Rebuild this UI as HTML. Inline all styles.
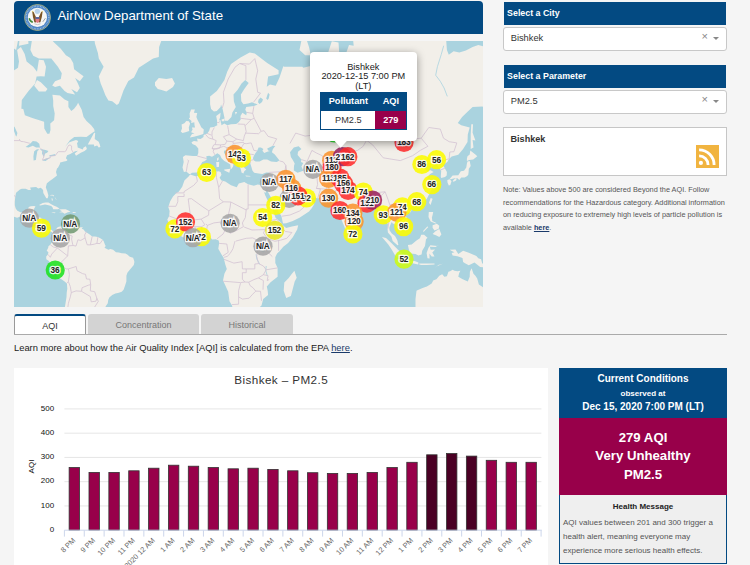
<!DOCTYPE html>
<html><head><meta charset="utf-8">
<style>
*{box-sizing:border-box;margin:0;padding:0}
html,body{width:750px;height:565px;overflow:hidden;background:#f5f5f5;font-family:"Liberation Sans",sans-serif;color:#222}
.abs{position:absolute}
#hdr{left:14px;top:1px;width:469px;height:33px;background:#034a82;border-radius:4px 4px 0 0}
#hdr .t{left:43.5px;top:7px;color:#fff;font-size:13.3px;white-space:nowrap}
#map{left:14px;top:41px;width:469px;height:266px;background:#aad3df;overflow:hidden}
.ph{left:503.5px;width:222.8px;height:23.4px;background:#034a82;color:#fff;font-weight:bold;font-size:8.85px;padding:0 0 0 3.6px;line-height:23px;white-space:nowrap}
.dd{left:503.4px;width:223.6px;height:24px;background:#fff;border:1px solid #c8c8c8;border-radius:3px;font-size:9.3px;color:#333;line-height:21px;padding-left:6.3px}
.dd .x{position:absolute;left:197px;top:-1.8px;color:#888;font-size:11px}
.dd .ar{position:absolute;left:209px;top:9.2px;width:0;height:0;border-left:3.4px solid transparent;border-right:3.4px solid transparent;border-top:3.4px solid #888}
#rss{left:503px;top:127px;width:224px;height:49px;background:#fff;border:1px solid #c6c6c6}
#note{left:503px;top:183.8px;width:226px;font-size:7.32px;line-height:12.85px;color:#555;white-space:nowrap}
#note b{color:#1a3a6a;text-decoration:underline}
.tab{top:314px;height:21px;border-radius:3px 3px 0 0;font-size:9px;color:#777;text-align:center;line-height:22.5px;background:#d3d3d3}
#tabline{left:14px;top:334px;width:713px;height:1px;background:#aaa}
#learn{left:14px;top:343px;font-size:9.35px;color:#222;white-space:nowrap}
#learn b{text-decoration:underline;color:#1a3a6a;font-weight:normal}
#chart{left:14px;top:368px;width:534px;height:197px;background:#fff}
#cc{left:559px;top:368px;width:168px;height:196px;background:#efefef;border:1px solid #034a82;border-top:none}
#cc .top{position:absolute;left:-1px;top:0;width:168px;height:50px;background:#034a82;color:#fff;font-weight:bold;text-align:center}
#cc .mid{position:absolute;left:-1px;top:50px;width:168px;height:77px;background:#98004a;color:#fff;font-weight:bold;text-align:center;font-size:13.2px;line-height:18.6px;padding-top:10.6px}
#cc .hm{position:absolute;left:0;top:133.6px;width:166px;text-align:center;font-weight:bold;font-size:8px;color:#222}
#cc .body{position:absolute;left:3px;top:147.6px;width:165px;font-size:8px;line-height:14px;color:#555;white-space:nowrap}
.ml{font:bold 8.3px "Liberation Sans",sans-serif;letter-spacing:-0.2px;text-anchor:middle;fill:#222;stroke:rgba(255,255,255,0.9);stroke-width:2.6px;stroke-linejoin:miter;paint-order:stroke}
.ct{font:11.7px "Liberation Sans",sans-serif;text-anchor:middle;fill:#333;letter-spacing:0.4px}
.yl{font:8px "Liberation Sans",sans-serif;text-anchor:end;fill:#111}
.yt{font:8px "Liberation Sans",sans-serif;text-anchor:middle;fill:#111}
.xl{font:7.4px "Liberation Sans",sans-serif;text-anchor:end;fill:#666}
</style></head><body>
<div id="hdr" class="abs">
  <svg class="abs" style="left:10px;top:3px" width="27" height="27" viewBox="0 0 27 27">
    <circle cx="13.5" cy="13.5" r="13" fill="#4f86c6" stroke="#b8b878" stroke-width="0.8"/>
    <circle cx="13.5" cy="13.5" r="11.4" fill="none" stroke="#a8c8ea" stroke-width="1.2" stroke-dasharray="0.7 0.9"/>
    <circle cx="13.4" cy="13.4" r="9.6" fill="#f6f6f4"/>
    <circle cx="13.4" cy="7.3" r="2.6" fill="#b8d2ea"/>
    <path d="M8.2 7.4 L9.6 7.9 Q11 11 12.4 14 L12 18.4 L10.4 18.2 Q8.6 12.5 8.2 7.4Z" fill="#7b5426"/>
    <path d="M18.6 7.4 L17.2 7.9 Q15.8 11 14.4 14 L14.8 18.4 L16.4 18.2 Q18.2 12.5 18.6 7.4Z" fill="#7b5426"/>
    <circle cx="8.6" cy="7.6" r="0.7" fill="#d8c860"/><circle cx="18.2" cy="7.6" r="0.7" fill="#d8c860"/>
    <circle cx="13.4" cy="12.2" r="1.1" fill="#fff"/>
    <path d="M11.5 13.2 H15.4 V16.6 Q15.4 18.4 13.45 19 Q11.5 18.4 11.5 16.6Z" fill="#e07a84"/>
    <rect x="11.5" y="13.2" width="3.9" height="1.6" fill="#3d5fa0"/>
    <path d="M5.2 14.2 Q6 17.5 8.8 18.2" stroke="#3f8a3c" stroke-width="1.5" fill="none"/>
    <path d="M18.8 17.8 L21.4 14.2" stroke="#9a9a9a" stroke-width="0.9"/>
    <path d="M10.5 19.8 Q13.5 21.6 16.5 19.8" stroke="#c8c8c8" stroke-width="1" fill="none"/>
  </svg>
  <div class="abs t">AirNow Department of State</div>
</div>
<div id="map" class="abs"><svg width="469" height="266" viewBox="0 0 469 266"><!--MAPSTART--><path d="M-60.7 28.3L-22.6 28.3L-11.2 28.3L0.2 29.3L4.0 26.7L5.0 20.4L3.1 9.0L6.9 5.9L10.7 13.1L12.6 20.4L19.2 25.7L23.0 30.8L24.9 18.7L29.7 19.3L32.0 25.7L30.6 35.6L26.8 35.2L22.6 35.6L21.1 42.6L14.5 50.0L7.8 59.0L7.4 67.7L9.3 68.1L10.9 74.2L18.3 76.9L30.1 80.7L30.3 87.5L33.3 92.7L35.4 92.7L36.5 89.0L36.3 82.6L40.1 79.3L40.7 72.4L39.2 65.1L39.2 59.4L38.4 53.8L45.9 54.6L50.6 58.6L54.4 60.2L54.4 65.9L57.3 69.9L60.1 67.7L63.0 64.0L64.1 61.7L67.7 68.8L69.6 75.9L72.5 80.0L77.2 84.3L80.1 88.1L80.7 90.3L78.0 92.1L72.5 96.0L66.8 95.7L60.3 96.0L55.9 99.3L52.5 104.1L51.2 105.8L55.4 101.3L62.0 99.0L64.3 100.1L63.0 102.4L63.4 104.1L63.7 106.6L68.7 108.6L69.6 106.6L71.9 105.3L72.9 108.0L70.6 109.9L66.8 111.8L62.0 114.7L60.7 112.6L63.9 109.7L61.1 110.2L59.2 111.3L56.3 112.9L53.1 114.2L51.9 117.3L53.5 119.1L52.5 119.9L50.0 120.4L46.2 121.6L45.9 123.1L44.1 126.4L43.0 127.6L42.0 130.9L43.0 134.5L41.1 136.1L38.2 138.2L36.0 139.8L32.9 142.3L31.8 146.3L33.3 150.4L34.4 154.5L33.7 157.2L32.3 157.2L31.0 155.1L29.3 152.1L29.1 148.9L26.8 146.7L24.2 147.6L22.1 146.0L19.0 146.3L16.2 146.5L16.9 148.9L14.5 148.9L11.6 147.8L7.8 147.8L5.9 148.5L2.1 151.7L1.3 155.5L0.8 160.8L0.8 164.3L1.7 167.5L3.4 169.8L5.9 171.0L7.1 171.6L10.1 171.0L12.9 170.8L14.1 169.0L14.7 165.9L16.8 165.3L20.2 164.9L21.5 165.5L20.2 167.5L19.6 171.0L18.7 173.0L18.7 176.0L20.6 176.4L23.2 176.2L26.3 176.4L28.4 177.9L28.0 181.9L27.4 185.7L28.7 187.7L30.6 189.6L33.5 189.2L35.4 188.5L37.3 188.8L39.4 190.4L40.5 190.8L42.0 188.8L43.0 186.7L44.9 185.7L47.8 185.2L49.3 183.8L51.0 184.2L53.1 184.8L53.5 183.4L54.4 184.8L56.9 186.7L61.1 186.5L64.5 186.7L66.8 186.3L68.9 186.3L67.7 187.7L69.6 188.6L71.0 190.6L73.4 191.9L75.7 193.6L78.2 195.4L81.0 195.6L83.9 196.1L86.7 197.5L88.6 198.8L89.6 200.1L90.9 203.4L91.7 204.9L90.5 206.8L94.4 208.7L96.3 207.9L99.1 208.7L102.0 211.2L104.8 211.6L107.7 212.3L111.5 212.5L113.6 213.8L115.8 215.8L119.1 216.7L120.0 219.2L120.4 221.1L119.8 224.0L118.1 225.9L115.8 228.8L113.4 231.7L112.4 234.7L112.4 240.6L111.1 244.6L109.6 248.7L107.7 250.7L104.8 251.8L101.4 252.6L98.2 253.9L95.3 256.4L94.2 259.1L93.8 262.3L91.9 265.1L90.5 267.8L88.6 271.1L85.8 275.0L78.2 285.1L47.8 285.1L50.4 273.4L50.8 266.7L51.7 261.2L52.5 255.9L52.7 251.8L53.3 247.7L52.9 242.6L50.6 240.6L47.8 238.6L43.9 236.1L41.5 233.3L39.8 229.8L38.2 225.9L36.3 222.1L34.6 219.8L32.3 218.2L32.2 215.4L33.9 213.5L34.4 211.2L32.7 209.7L34.2 206.8L34.4 205.3L36.3 203.8L37.3 202.0L39.2 199.6L39.6 195.4L38.8 192.9L37.9 191.1L35.4 190.0L33.9 192.7L31.6 191.5L29.1 191.0L27.8 190.6L25.3 188.1L23.6 187.7L23.4 185.4L21.1 182.8L20.0 181.5L18.3 181.5L15.4 180.5L12.6 179.9L10.7 178.3L8.2 176.2L6.3 175.6L3.1 176.7L-0.7 175.6L-5.5 173.0L-14.1 166.9L-22.6 159.7L-41.6 146.9L-60.7 63.3ZM25.1 164.1L28.7 162.0L31.6 161.6L34.4 161.6L37.3 163.3L39.6 164.5L42.6 165.7L45.5 167.5L43.9 168.2L39.2 168.2L38.6 166.5L37.3 164.9L33.5 163.9L31.0 163.5L28.7 163.9L26.1 164.5ZM45.1 168.4L48.1 168.2L51.6 168.2L54.4 169.4L56.5 170.8L53.8 171.2L50.6 172.8L48.7 171.6L45.1 171.2L48.1 170.2ZM37.7 171.2L41.7 171.6L40.5 172.2L37.7 171.6ZM37.5 157.2L38.8 157.7L38.6 159.7L37.9 159.7ZM36.3 154.1L38.4 153.8L40.1 154.5L40.0 155.5L38.4 154.5L36.3 154.5ZM40.7 156.4L41.7 157.0L41.9 158.5L42.6 159.3L42.2 158.3L41.1 157.2ZM58.6 171.0L61.8 171.2L61.6 172.0L58.8 172.0ZM47.8 -38.8L76.3 -21.8L72.5 -20.2L79.1 -10.6L81.0 2.8L83.9 11.9L84.8 17.6L89.6 25.7L84.8 35.6L86.7 42.6L88.6 47.0L91.5 54.6L94.4 59.4L98.2 60.2L102.9 64.0L104.8 62.5L106.7 57.4L109.6 49.2L114.3 39.9L120.0 36.6L124.8 26.7L139.1 17.6L144.8 16.0L145.1 5.9L148.6 -3.7L152.4 -30.0L148.6 -83.2L72.5 -83.2ZM141.0 41.2L144.8 37.1L152.4 38.0L158.1 37.1L160.9 42.6L159.0 46.1L152.4 50.4L146.7 48.7L143.8 47.9L141.0 44.4ZM24.9 -3.7L34.4 -5.0L40.1 1.5L46.8 7.8L51.9 14.3L56.3 17.1L59.2 22.0L60.1 28.3L66.8 33.2L69.6 35.2L65.8 40.3L61.1 37.1L63.9 42.6L65.8 47.0L63.0 51.3L57.3 47.9L61.1 53.4L53.5 52.1L50.6 50.0L45.9 44.8L41.1 46.1L38.2 44.4L41.1 40.3L46.8 38.0L47.8 32.3L43.9 25.7L37.3 17.6L24.9 17.6L19.2 14.8L16.4 9.0L18.3 -3.0ZM20.2 44.8L23.0 38.9L26.8 41.2L33.5 47.9L31.6 50.4L24.9 50.4ZM5.0 4.7L14.5 2.8L13.5 -10.6L5.9 -7.1ZM2.1 9.0L-6.5 2.8L-7.4 -3.7L0.2 -7.1L4.0 -0.4ZM73.8 103.6L80.1 91.8L81.2 92.1L80.7 98.1L84.7 100.7L85.8 103.6L86.4 106.1L84.7 106.4L83.1 104.4L80.3 105.5L79.9 103.6L75.3 103.6ZM509.9 23.1L490.9 17.6L481.4 11.9L471.9 5.9L464.3 4.1L458.6 5.9L451.9 9.6L445.3 11.4L439.6 10.2L434.8 13.7L432.9 9.0L432.0 -3.7L414.8 -3.7L401.5 -5.0L392.0 -1.7L386.3 -34.3L357.8 -17.9L338.8 -3.7L339.7 4.7L335.0 4.1L326.4 28.3L324.5 1.5L317.8 0.3L313.1 14.8L314.0 21.5L300.7 24.1L289.3 26.7L288.4 25.7L270.3 25.7L269.3 25.2L265.5 36.6L261.7 44.8L256.0 43.5L252.8 45.7L254.1 35.6L264.6 33.2L264.6 29.3L253.2 22.0L240.8 12.5L235.7 11.4L226.5 16.5L217.0 23.1L213.2 30.8L210.4 38.9L206.6 44.8L202.8 50.0L196.1 55.4L196.1 63.3L197.1 68.1L199.9 70.6L202.8 69.9L206.6 65.9L207.0 63.6L208.5 67.4L209.4 71.7L211.1 79.8L213.8 79.7L217.4 75.9L218.4 71.4L221.8 65.9L219.9 60.6L219.5 53.4L223.7 48.7L227.5 42.6L231.3 38.9L234.7 42.1L230.3 47.9L226.9 53.4L227.3 60.2L229.4 63.3L234.1 62.5L238.0 61.3L243.7 63.6L239.9 65.1L232.2 65.9L231.3 68.8L232.8 71.4L232.2 74.2L228.4 71.7L226.5 74.9L226.7 78.6L224.6 81.3L222.2 83.0L217.0 83.3L213.2 84.3L210.4 82.6L207.5 84.3L207.1 81.7L205.2 79.0L206.2 75.9L206.6 71.7L202.2 74.9L203.0 79.3L203.0 81.3L203.3 84.3L199.9 85.9L196.1 86.5L195.2 89.7L193.3 92.4L189.6 93.9L189.5 96.0L186.6 98.1L184.1 97.8L183.0 97.5L183.7 100.4L179.9 100.1L177.5 101.3L178.4 103.0L181.8 104.4L184.3 107.5L184.3 112.1L183.2 115.0L179.0 115.0L171.4 114.2L168.9 116.0L169.7 121.1L168.5 126.6L169.9 130.9L172.3 130.5L175.2 133.1L176.3 133.1L178.0 131.7L182.8 131.4L185.1 129.5L186.6 126.6L186.0 124.9L188.3 121.1L190.8 120.1L192.7 118.6L192.3 115.2L195.2 114.7L198.0 115.8L200.9 113.9L203.3 112.3L206.0 113.9L207.5 117.3L210.4 119.9L213.2 121.6L216.3 123.6L216.7 127.3L216.5 128.5L218.0 127.3L219.3 125.1L219.3 122.4L221.8 123.1L220.8 121.9L217.0 119.9L213.4 117.3L212.5 114.5L210.0 112.1L210.0 109.7L212.8 109.1L214.2 110.7L216.1 113.7L218.9 115.5L221.8 117.6L223.7 119.4L223.5 122.9L225.0 124.9L226.7 127.8L227.5 131.4L229.4 132.4L230.3 130.2L232.2 128.5L230.0 126.4L231.3 123.6L229.6 122.4L233.2 121.6L236.1 121.6L236.6 123.4L237.4 126.1L238.5 129.7L240.2 131.7L244.6 132.6L248.4 133.1L252.2 131.4L255.1 131.4L254.7 134.5L254.1 137.9L253.0 141.4L251.8 144.1L248.0 144.3L243.7 143.6L239.9 144.7L234.1 143.2L230.3 140.9L224.8 142.5L222.7 146.3L217.0 144.3L211.3 140.5L207.5 139.5L205.6 136.8L207.5 133.8L206.6 130.9L204.7 130.2L199.9 130.9L192.3 131.4L186.6 133.5L182.4 135.4L176.1 133.5L174.6 135.6L170.4 139.5L168.2 145.8L164.7 150.8L161.9 152.4L159.0 155.5L156.2 160.2L154.3 165.9L155.6 170.0L155.2 175.0L153.3 178.5L154.6 181.9L154.8 183.2L157.1 184.8L159.0 186.7L161.3 188.6L162.8 192.5L166.6 194.8L172.1 198.4L177.1 197.1L182.8 197.7L188.5 195.4L192.3 194.6L196.1 196.3L198.2 198.6L201.8 198.2L204.7 199.4L205.2 202.0L204.7 204.9L204.3 207.8L207.5 213.5L209.4 216.3L210.0 218.2L211.3 223.6L212.8 227.9L210.4 232.7L209.0 239.6L210.9 243.6L214.2 250.7L215.5 260.2L218.0 264.5L220.8 275.7L234.1 276.8L247.5 264.5L249.2 258.1L254.1 253.9L253.7 249.7L252.8 245.6L256.6 241.2L263.6 235.7L263.6 226.9L261.3 222.1L261.3 216.3L263.1 212.5L265.5 210.2L269.3 205.8L274.1 202.0L278.8 196.3L283.2 188.6L284.2 184.2L277.9 185.4L272.2 186.9L269.0 184.6L266.5 180.9L261.7 176.9L259.8 172.0L257.5 165.9L254.1 160.2L251.3 154.5L248.6 147.1L250.3 151.3L251.8 151.7L252.2 148.0L253.2 148.0L254.1 151.3L257.0 156.6L260.8 163.9L263.6 169.0L267.4 175.0L269.0 182.4L272.2 182.2L278.8 179.9L285.5 176.7L291.2 173.0L295.0 170.4L297.9 166.9L300.3 162.9L297.9 160.4L294.1 158.7L293.7 154.9L291.2 157.7L285.5 159.7L284.6 156.6L283.2 158.1L281.7 154.5L277.9 148.0L278.8 146.9L281.7 146.9L283.6 150.2L289.3 154.1L294.1 153.2L296.0 156.2L303.6 157.2L308.3 157.0L313.1 156.8L314.0 158.1L315.9 160.2L317.8 162.9L319.7 165.9L324.7 165.3L325.1 170.0L326.4 176.0L327.3 177.9L328.9 182.2L331.2 187.7L334.0 191.3L335.3 189.6L337.4 187.1L339.1 181.9L339.1 176.9L343.1 174.8L347.3 170.4L351.5 167.3L352.1 164.9L354.9 164.5L358.7 163.9L361.2 163.1L362.5 166.9L365.8 172.0L366.3 176.0L368.2 176.4L372.0 175.0L373.0 179.9L373.9 183.8L373.6 188.6L373.9 191.5L377.4 195.4L378.7 200.1L383.5 204.3L384.4 203.9L383.3 199.2L381.0 195.0L377.8 192.5L375.5 189.2L375.3 186.7L376.8 182.8L377.8 180.9L378.7 182.4L381.6 183.4L383.5 186.7L385.9 190.4L389.2 188.6L393.7 184.8L394.5 180.9L393.2 176.9L389.5 173.0L387.8 170.0L389.7 166.5L392.0 164.9L395.8 167.3L396.8 165.5L402.5 163.5L403.8 163.3L408.2 162.0L412.9 157.7L414.5 154.5L416.7 150.2L418.5 146.9L418.3 144.7L416.4 140.9L413.3 136.8L415.8 133.3L419.6 130.9L416.7 129.3L412.6 130.2L411.0 127.3L410.5 126.1L413.3 124.1L416.7 121.6L417.1 126.6L419.6 124.1L423.0 123.9L424.4 126.1L427.2 129.7L426.8 135.6L427.2 137.0L431.0 136.1L432.7 134.5L432.9 130.9L430.8 127.3L429.1 124.1L433.3 121.1L435.2 117.8L437.7 115.5L444.3 113.7L449.1 108.0L453.5 101.0L453.8 93.6L455.7 86.5L447.2 84.3L443.8 82.0L448.1 75.9L453.8 70.6L458.6 65.9L468.1 65.5L475.7 67.0L509.9 63.3ZM207.5 78.6L210.6 77.6L210.4 80.3L207.9 80.3ZM205.6 79.3L207.1 79.7L206.8 81.0L205.4 80.7ZM221.0 71.0L223.1 71.0L221.8 73.8ZM175.8 96.6L179.9 95.7L184.7 94.5L189.3 93.0L189.8 88.4L187.2 86.2L186.2 83.9L183.6 79.0L182.4 75.9L183.2 72.1L179.9 71.7L180.9 68.5L177.1 68.5L175.6 72.4L175.9 76.6L174.8 77.6L177.5 80.0L177.1 82.0L180.3 81.3L180.5 84.3L181.1 86.5L177.9 86.5L178.6 88.4L177.1 91.2L180.5 92.4L178.0 93.0ZM175.2 90.0L174.8 86.5L176.1 82.6L174.8 80.3L172.3 80.0L170.4 82.3L167.6 83.6L168.0 87.5L166.8 90.6L168.5 92.1L171.4 91.2ZM202.6 126.1L204.9 126.1L205.2 121.1L202.2 121.1ZM203.0 119.9L204.7 118.6L204.5 116.0L203.0 117.6ZM210.2 128.5L216.3 127.8L215.3 131.7L210.4 129.5ZM231.3 134.5L236.6 134.9L236.1 135.6L232.2 135.4ZM248.0 135.6L252.4 134.0L250.9 135.9L248.4 136.3ZM280.4 229.8L282.7 236.7L280.7 240.6L276.9 254.9L272.2 257.0L269.7 249.7L270.3 241.6L274.7 237.0L277.9 232.7ZM338.6 194.4L338.8 190.6L339.1 188.1L341.0 190.6L342.4 193.4L341.6 195.0L339.9 195.6ZM285.5 9.0L291.2 14.3L296.9 14.3L295.0 5.9L292.2 -2.4L293.1 -14.2L287.4 -0.4ZM367.9 196.1L372.0 196.9L377.4 202.0L384.0 208.7L388.2 212.5L387.8 217.9L385.4 218.0L381.2 214.4L377.8 208.7L374.3 203.6ZM386.7 219.8L389.2 218.2L392.6 218.6L396.8 219.8L400.6 220.0L404.4 221.5L404.2 223.4L399.6 222.6L393.0 221.7L389.2 220.9ZM405.3 222.5L407.2 222.6L412.9 222.5L420.5 222.6L420.5 223.6L412.9 224.0L407.2 224.0L405.3 223.6ZM422.4 225.5L428.7 222.8L424.4 224.0L421.5 226.5ZM393.9 203.9L394.9 208.7L396.4 212.5L401.5 212.9L404.4 214.4L407.6 213.5L408.2 209.7L411.0 204.9L412.0 198.2L413.5 196.7L410.1 193.8L407.2 193.8L405.9 197.3L402.5 199.6L397.7 203.4ZM413.5 217.3L415.6 217.5L415.4 212.5L417.7 215.6L420.5 215.4L418.3 211.6L421.1 208.5L416.7 208.7L415.8 205.8L421.5 206.0L424.7 203.9L423.4 205.1L416.4 204.3L414.5 206.8L412.6 212.1ZM414.8 171.0L419.2 171.0L418.6 174.0L417.9 176.4L418.3 179.9L422.4 181.9L421.5 182.4L416.7 180.5L416.0 179.3L414.5 176.0ZM418.6 193.1L421.5 190.2L425.3 188.1L427.4 193.4L425.3 196.1L422.4 194.4ZM418.6 184.2L422.8 182.8L425.3 184.8L424.7 187.7L420.5 189.6L418.6 186.7ZM409.5 191.0L414.3 186.1L413.3 185.4L409.1 190.0ZM415.0 161.8L416.7 157.0L418.6 157.7L416.6 163.9L416.0 163.3ZM393.2 169.4L395.8 167.8L397.7 168.8L396.2 171.6L393.3 171.0ZM435.6 137.9L438.6 134.5L444.3 134.2L446.8 130.2L450.0 129.7L452.3 126.6L452.9 122.4L453.5 120.4L455.7 120.1L456.7 124.9L454.8 127.8L454.6 131.2L454.2 134.0L452.5 135.6L450.6 136.6L447.2 136.6L445.3 139.1L443.4 137.3L440.5 137.3L436.7 138.2ZM433.3 139.1L435.8 138.2L437.5 140.2L436.3 144.1L434.8 144.5L433.5 141.4ZM438.6 140.0L441.1 137.5L442.8 137.7L442.0 139.5L439.6 140.7ZM452.9 119.9L455.2 119.1L459.2 118.6L463.3 115.2L461.4 113.4L456.3 109.4L455.7 113.4L453.5 115.2L452.9 117.8ZM456.7 108.0L459.5 106.6L458.6 99.0L461.4 99.6L458.6 91.8L459.0 83.3L457.3 83.3L456.7 93.6L456.7 102.4ZM435.8 208.7L441.5 208.5L444.3 213.1L449.1 209.8L454.8 211.7L462.4 215.0L464.3 217.3L467.1 218.2L468.1 222.1L472.9 226.9L466.2 225.9L460.5 221.5L454.8 224.2L451.0 222.3L449.1 221.1L448.5 216.9L443.4 215.2L438.6 214.4L437.7 212.1L440.5 211.2L437.3 209.7ZM402.5 249.7L403.4 249.3L408.6 246.9L412.9 245.6L417.7 242.6L419.2 239.6L422.4 238.2L425.3 234.7L428.2 233.3L430.4 235.7L432.9 235.3L434.4 230.8L436.1 230.2L438.6 228.8L440.5 229.8L443.4 230.2L446.4 229.8L445.1 232.3L444.3 235.7L448.7 238.2L453.8 240.6L455.7 235.7L455.9 230.8L457.6 227.3L459.5 232.7L461.4 234.7L463.2 237.6L464.9 243.6L469.6 246.7L472.9 250.7L477.6 255.9L478.6 262.3L478.6 278.0L401.5 278.0L401.5 258.1Z" fill="#f2efe9"/><path d="M11.6 106.1L16.4 102.4L18.8 99.9L22.5 100.4L25.3 102.7L25.9 106.6L22.1 106.6L18.8 104.7L14.5 106.4ZM19.6 119.4L21.9 119.1L22.5 114.7L23.4 109.9L25.3 108.6L23.0 108.3L20.2 110.2L19.4 115.2ZM25.7 108.3L27.8 108.3L31.6 109.1L34.4 109.9L33.1 111.8L31.2 112.6L29.7 116.0L28.0 112.6L28.2 109.9ZM28.2 119.4L31.6 119.9L36.3 116.5L33.5 117.1L29.7 118.6ZM35.0 115.2L41.5 114.7L41.1 112.9L38.2 113.7L35.6 114.2ZM238.9 117.3L239.9 114.7L241.2 112.6L243.1 109.9L244.6 106.6L246.9 106.4L249.4 108.0L248.4 109.7L250.3 112.1L253.2 110.7L256.0 109.9L254.1 109.4L253.2 107.5L258.9 104.7L261.3 105.0L258.9 108.0L257.9 111.3L260.8 113.4L265.5 119.6L262.7 121.1L257.0 120.6L253.2 118.6L249.4 118.6L245.6 120.6L241.8 120.6L239.9 119.6ZM276.0 111.3L279.8 106.6L284.6 105.3L287.4 108.0L284.0 110.7L283.6 113.9L287.4 118.6L287.0 121.1L289.3 121.9L287.4 125.4L289.3 129.7L283.6 131.7L279.8 129.5L280.0 124.9L280.7 122.4L278.8 119.1L276.9 116.0ZM384.0 91.5L386.3 91.5L391.1 89.0L394.5 83.6L395.1 78.6L393.9 79.3L391.1 85.9L387.3 88.4L384.4 90.6ZM327.3 106.6L336.9 106.1L335.9 108.8L328.3 109.9ZM247.1 208.7L247.5 206.2L250.3 206.0L251.5 207.4L251.3 209.7L249.4 211.6L247.5 210.6ZM244.6 58.6L246.7 56.6L249.0 58.6L248.0 60.9L245.6 62.9L244.0 61.3ZM252.2 57.4L254.1 51.7L255.6 53.4L254.7 57.4L253.6 59.0ZM2.5 95.4L3.4 92.1L0.6 85.9L-1.3 84.9L-2.1 86.8L0.2 90.6L1.7 94.8Z" fill="#aad3df"/><path d="M433.3 55.4L430.1 47.0L426.3 40.3L421.7 34.2L423.4 25.7L427.2 13.7L429.7 4.7M252.2 225.0L251.8 229.8L253.2 234.3M242.1 213.3L242.9 218.2L244.6 221.1L245.6 223.2" fill="none" stroke="#aad3df" stroke-width="0.8"/><path d="M-47.3 99.6L5.5 99.6L5.5 98.4L6.7 100.4L9.7 100.7L15.4 102.2L16.2 102.4M25.9 106.6L26.8 107.5L27.8 108.6L29.7 109.9L29.9 116.0L28.5 118.3L28.7 119.1L36.3 116.8L36.3 115.2L41.3 114.5L43.9 111.0L44.5 110.7L50.6 110.7L52.1 109.7L53.5 106.1L55.0 104.0L56.9 104.4L57.6 105.0L57.6 108.8L59.2 111.3M1.7 155.8L-2.6 152.4L-6.3 147.4L-9.3 149.1L-12.2 147.8L-16.0 142.9L-24.5 144.1M11.2 178.9L11.2 177.3L12.2 175.8L14.7 175.8L14.7 172.4L16.9 172.4L18.7 171.0M16.9 172.4L16.9 176.2L18.8 176.6M16.9 176.2L16.8 179.1L15.2 180.5M16.8 179.1L19.6 181.1M28.4 177.9L24.0 180.1L20.6 182.0M27.4 185.9L23.6 185.5M29.5 188.5L28.9 191.3M39.4 190.4L38.4 193.1M49.3 184.0L48.7 186.7L49.1 191.5L53.5 193.4L58.2 195.0L57.6 198.2L58.6 203.0L59.2 204.5M72.5 190.6L70.6 194.0L71.1 196.9L66.8 199.4L63.9 198.8L62.0 205.1L59.2 204.5M59.2 204.5L54.4 204.9L53.7 214.8M36.3 203.8L39.4 206.0L43.4 207.0L53.5 214.8L53.7 214.8M33.9 213.3L36.3 216.3L37.7 213.1L43.4 207.0M53.7 214.8L47.8 220.7L46.8 225.0L52.3 227.9L54.4 227.9L55.4 233.7L54.4 240.6L52.7 242.2M54.4 240.6L56.3 245.6L57.3 251.6L56.3 255.9L54.4 262.3L53.5 268.9L53.5 275.7M54.4 227.9L62.2 225.5L63.0 229.8L68.7 232.7L71.5 233.3L72.5 238.0L75.9 238.2L76.7 243.6M76.7 243.6L74.4 244.2L68.1 246.7L67.5 250.3L62.0 249.9L57.3 251.6M67.5 250.3L76.3 255.5L77.2 260.8L82.0 260.2L82.8 257.2M76.7 243.6L76.3 249.9L80.7 250.7L82.8 257.2L84.3 260.4L80.1 266.9L85.0 275.0M80.1 266.9L75.5 275.4M78.2 195.4L76.3 203.9M83.9 196.1L82.9 202.4M88.5 199.0L86.0 202.6L82.9 202.4L80.1 203.2L76.3 203.9L73.2 203.8L71.1 196.9M182.4 135.4L183.4 140.2L179.8 144.3L170.1 150.6L170.1 151.9L161.5 151.9M170.1 152.8L170.1 155.5L163.8 155.5L163.8 160.8L161.9 165.3L154.3 165.3M155.2 175.0L163.8 178.3L164.7 176.9L176.1 176.9L176.5 175.6L174.2 157.9L177.5 157.7L188.9 165.9L194.8 169.8L209.4 160.8L205.6 157.7L204.7 146.5L208.5 140.0M202.2 131.2L202.4 136.3L204.7 146.5M234.1 143.4L234.1 168.0L232.2 168.0L232.2 169.0L216.8 161.0L209.4 160.8M234.1 163.9L256.8 163.9M216.8 161.0L216.1 166.3L212.7 180.9M191.9 183.0L193.4 184.4L199.9 181.9L206.4 181.1L212.7 180.9L214.2 182.8M194.8 169.8L194.6 174.2L187.2 178.1L179.0 179.1L176.1 187.1M187.2 178.1L190.8 183.8L187.6 185.7L180.9 185.7L176.7 185.0M191.7 194.6L193.4 184.4M188.7 195.4L187.6 185.7M181.3 197.3L181.7 189.6L180.9 185.7M232.2 169.0L231.3 176.6L228.4 181.9L229.4 185.7M216.1 192.3L221.8 189.8L229.4 185.7M216.1 192.3L214.2 182.8M203.0 197.8L209.0 193.1L212.5 186.7L214.2 182.8M230.2 186.1L238.0 189.0L251.3 188.6M256.0 179.5L252.2 186.1L251.3 188.6L249.4 191.9L253.2 197.3M256.0 179.5L262.9 178.5L267.2 182.8M268.4 187.7L271.2 190.4L277.9 191.5L272.8 197.3L266.5 199.2L260.8 200.3L254.1 197.7M264.6 199.2L264.6 209.8M258.3 215.6L251.3 208.7M251.3 198.8L251.3 204.9L251.3 208.7M221.8 200.1L232.2 197.3L238.7 196.9L245.2 200.1M210.0 216.3L213.2 215.4L216.1 212.5L218.9 207.8L221.0 200.1M209.0 214.8L214.2 211.4L212.8 203.0L208.1 202.6L205.2 202.4M209.8 218.2L218.2 221.5L219.9 222.1L228.1 220.7L228.4 227.9L232.2 227.9M228.4 231.7L228.4 238.2L230.9 241.0M209.0 240.2L226.4 241.6L230.9 241.0M218.0 263.6L224.6 263.2L224.6 255.9L224.6 249.7L226.5 242.2M263.6 226.9L252.2 228.8M249.0 248.7L249.4 239.6L244.4 236.9M247.5 259.8L246.5 250.3M245.2 200.1L243.7 208.7L242.7 215.4L244.6 222.6L240.8 223.0L240.8 227.9L232.2 227.9M230.9 241.0L234.7 241.2L239.9 238.6L244.4 236.9M234.7 241.2L236.1 244.6L238.9 246.7L241.8 250.1M224.6 255.9L228.4 258.1L235.1 257.2L238.0 253.9L241.8 250.1L246.5 250.3M244.4 236.9L249.4 233.7L252.2 228.8M244.6 222.6L249.4 225.0L252.2 228.8M232.2 227.9L232.2 231.7L228.4 231.7M249.4 233.7L254.1 234.7L253.2 239.6L255.1 238.6M183.2 115.0L192.7 117.6M191.4 93.3L194.6 96.9L198.8 98.1L202.2 99.6L201.1 103.6L199.7 103.9L198.0 107.5L199.9 108.3L199.2 110.5L200.9 113.9M201.1 103.6L206.6 103.9L206.0 106.9L202.8 108.0L198.0 107.5M200.3 86.5L198.0 90.9L198.0 94.5L198.8 98.1M193.1 92.4L197.6 94.2M203.0 81.3L205.4 81.7M213.6 84.6L214.4 88.7L215.1 93.6L209.4 95.7L212.8 100.1L211.3 103.3L206.6 103.9M215.1 93.6L222.7 98.1L229.4 99.6L230.3 95.1L232.2 90.6L230.7 83.3L230.0 83.3L223.7 83.0M212.8 100.1L218.9 100.7L222.7 98.1M218.9 100.7L219.3 102.4L229.4 101.3L230.0 102.4M226.5 77.3L237.0 78.6M232.8 71.4L238.7 72.4M239.9 65.1L238.7 72.4L240.2 77.3M231.3 84.6L237.2 78.6L240.2 77.3L247.1 90.3L244.6 92.7L231.5 92.1M230.0 102.4L232.2 102.7L237.2 101.9L239.9 109.4L243.1 109.9M247.1 90.3L250.1 89.7L254.1 95.4L262.7 97.8L258.9 104.7M240.8 17.6L243.7 29.8L241.8 38.0L243.7 51.3L246.5 52.1L239.5 61.3M231.9 38.9L231.9 24.7L225.8 22.5L235.5 23.1L240.8 17.6M225.8 22.5L221.0 26.2L214.2 38.0L209.4 51.3L210.0 61.3L208.3 67.0M229.4 112.1L239.9 113.7M226.5 108.0L230.0 102.4M225.2 107.7L226.5 108.0M236.4 119.4L236.2 122.1M229.4 120.4L236.6 119.4L239.9 118.6M199.9 108.3L206.4 106.4L209.8 105.3L212.7 106.6L212.5 109.1M173.5 118.9L174.6 119.6L173.3 124.4L172.3 130.5M212.7 106.6L218.0 106.6L225.2 107.7L229.4 112.1L229.4 120.4L225.6 121.1L223.7 119.4M216.1 109.4L223.5 111.0L222.7 117.3M218.0 106.6L219.3 102.4M255.1 131.4L267.2 130.7M265.5 119.9L269.3 120.9L271.8 124.4L270.9 130.5L267.2 130.7M267.2 130.7L265.0 136.8L260.4 139.3L254.3 140.9M253.2 148.0L257.0 143.6L260.8 142.5L271.6 148.7L275.0 148.9L277.9 150.2M271.8 124.4L273.1 133.8L274.1 140.2L277.5 143.6L278.8 146.9M268.0 175.2L276.0 174.0L285.5 170.0L292.5 163.9L291.2 159.7L284.7 159.1M289.3 129.7L295.0 128.5L302.6 132.1L303.6 143.6L302.4 147.4L306.4 148.0L303.8 157.2M302.4 147.4L312.1 148.2L313.1 144.7L318.8 138.4L321.6 136.8L322.6 132.1L328.3 130.9M302.6 132.1L309.3 130.5L315.6 130.7L322.6 129.0L328.3 130.9M316.3 160.4L321.6 158.7L319.7 151.9L328.3 142.5L328.3 136.3L334.6 134.5M334.6 134.5L338.8 140.9L340.7 146.9L346.4 150.0L354.0 151.5L361.6 151.7L371.1 150.8M338.8 149.5L346.4 152.6L354.0 154.5M371.1 150.8L373.9 158.1L375.8 163.9L379.7 163.3L386.3 161.8L392.0 164.7M276.0 102.4L281.7 92.1L291.2 95.1L302.6 93.6L303.6 84.3L317.8 80.0L327.3 85.9L333.1 87.5L344.5 93.6L352.6 99.3M352.6 99.3L349.2 105.3L343.5 109.4L338.8 110.7L339.1 117.8L327.3 116.0L321.6 118.6L320.7 123.6L326.4 124.9L339.1 117.8M293.1 120.4L297.9 109.4L302.6 112.1L308.3 114.7L312.1 121.1L304.5 126.1L295.0 128.5M293.1 120.4L287.4 118.6M352.6 99.3L358.7 103.9L369.2 116.8L386.3 119.6L398.7 114.7L406.3 109.4L413.9 105.3L407.2 97.2M352.6 99.3L361.6 94.5L373.0 90.6L386.3 95.7L392.0 98.7L407.2 97.2M407.2 97.2L414.8 86.5L426.3 88.1L429.5 97.2L435.2 100.7L442.8 101.9L439.9 110.7L435.8 111.0L435.2 117.8M423.0 123.9L432.0 118.6L435.2 117.8M426.4 129.0L430.8 127.3M384.4 162.9L390.1 174.0L391.1 178.9L388.2 185.7M379.7 163.3L376.8 167.3L379.7 173.0L387.3 179.5L382.5 184.8M373.9 187.7L375.5 176.0L372.6 171.0L376.8 167.3M362.5 166.9L364.4 159.7L367.3 154.5L371.1 150.8M354.0 154.5L355.9 163.9M361.6 151.7L355.9 153.8" fill="none" stroke="#d3c3d3" stroke-width="0.8" stroke-linejoin="round"/><circle cx="15.3" cy="177.2" r="9.6" fill="rgb(165,165,165)" fill-opacity="0.88"/><circle cx="27.5" cy="187.1" r="9.6" fill="rgb(252,252,0)" fill-opacity="0.88"/><circle cx="56.5" cy="182.9" r="9.6" fill="rgb(115,155,115)" fill-opacity="0.88"/><circle cx="46.4" cy="197.2" r="9.6" fill="rgb(165,165,165)" fill-opacity="0.88"/><circle cx="41.2" cy="229.0" r="9.6" fill="rgb(30,225,30)" fill-opacity="0.88"/><circle cx="220.8" cy="113.4" r="9.6" fill="rgb(250,148,45)" fill-opacity="0.88"/><circle cx="227.4" cy="117.1" r="9.6" fill="rgb(252,252,0)" fill-opacity="0.88"/><circle cx="192.7" cy="131.5" r="9.6" fill="rgb(252,252,0)" fill-opacity="0.88"/><circle cx="160.9" cy="187.8" r="9.6" fill="rgb(252,252,0)" fill-opacity="0.88"/><circle cx="171.5" cy="180.8" r="9.6" fill="rgb(255,45,45)" fill-opacity="0.88"/><circle cx="187.4" cy="195.7" r="9.6" fill="rgb(252,252,0)" fill-opacity="0.88"/><circle cx="178.9" cy="196.7" r="9.6" fill="rgb(165,165,165)" fill-opacity="0.88"/><circle cx="216.1" cy="182.3" r="9.6" fill="rgb(165,165,165)" fill-opacity="0.88"/><circle cx="255.4" cy="141.5" r="9.6" fill="rgb(165,165,165)" fill-opacity="0.88"/><circle cx="271.8" cy="138.3" r="9.6" fill="rgb(250,148,45)" fill-opacity="0.88"/><circle cx="277.7" cy="147.4" r="9.6" fill="rgb(250,148,45)" fill-opacity="0.88"/><circle cx="292.5" cy="157.0" r="9.6" fill="rgb(252,252,0)" fill-opacity="0.88"/><circle cx="275.2" cy="157.4" r="9.6" fill="rgb(165,165,165)" fill-opacity="0.88"/><circle cx="284.0" cy="154.8" r="9.6" fill="rgb(255,45,45)" fill-opacity="0.88"/><circle cx="261.8" cy="164.4" r="9.6" fill="rgb(252,252,0)" fill-opacity="0.88"/><circle cx="248.6" cy="176.5" r="9.6" fill="rgb(252,252,0)" fill-opacity="0.88"/><circle cx="249.0" cy="205.2" r="9.6" fill="rgb(165,165,165)" fill-opacity="0.88"/><circle cx="260.7" cy="189.3" r="9.6" fill="rgb(232,232,30)" fill-opacity="0.88"/><circle cx="320.5" cy="92.0" r="9.6" fill="rgb(30,225,30)" fill-opacity="0.88"/><circle cx="298.9" cy="128.3" r="9.6" fill="rgb(165,165,165)" fill-opacity="0.88"/><circle cx="317.7" cy="119.4" r="9.6" fill="rgb(250,148,45)" fill-opacity="0.88"/><circle cx="318.0" cy="126.5" r="9.6" fill="rgb(255,45,45)" fill-opacity="0.88"/><circle cx="314.6" cy="137.4" r="9.6" fill="rgb(250,148,45)" fill-opacity="0.88"/><circle cx="328.3" cy="115.7" r="9.6" fill="rgb(155,35,95)" fill-opacity="0.88"/><circle cx="333.8" cy="115.7" r="9.6" fill="rgb(255,45,45)" fill-opacity="0.88"/><circle cx="326.0" cy="137.0" r="9.6" fill="rgb(255,45,45)" fill-opacity="0.88"/><circle cx="329.5" cy="142.6" r="9.6" fill="rgb(255,45,45)" fill-opacity="0.88"/><circle cx="334.1" cy="149.4" r="9.6" fill="rgb(255,45,45)" fill-opacity="0.88"/><circle cx="314.6" cy="157.2" r="9.6" fill="rgb(250,148,45)" fill-opacity="0.88"/><circle cx="349.3" cy="151.0" r="9.6" fill="rgb(252,252,0)" fill-opacity="0.88"/><circle cx="353.0" cy="162.2" r="9.6" fill="rgb(255,45,45)" fill-opacity="0.88"/><circle cx="358.6" cy="159.1" r="9.6" fill="rgb(155,35,95)" fill-opacity="0.88"/><circle cx="325.9" cy="169.5" r="9.6" fill="rgb(255,45,45)" fill-opacity="0.88"/><circle cx="338.9" cy="172.0" r="9.6" fill="rgb(250,148,45)" fill-opacity="0.88"/><circle cx="340.1" cy="180.6" r="9.6" fill="rgb(250,148,45)" fill-opacity="0.88"/><circle cx="338.9" cy="193.0" r="9.6" fill="rgb(252,252,0)" fill-opacity="0.88"/><circle cx="369.2" cy="173.8" r="9.6" fill="rgb(252,252,0)" fill-opacity="0.88"/><circle cx="388.4" cy="165.8" r="9.6" fill="rgb(252,252,0)" fill-opacity="0.88"/><circle cx="382.9" cy="171.3" r="9.6" fill="rgb(250,148,45)" fill-opacity="0.88"/><circle cx="402.8" cy="160.7" r="9.6" fill="rgb(252,252,0)" fill-opacity="0.88"/><circle cx="389.7" cy="185.6" r="9.6" fill="rgb(252,252,0)" fill-opacity="0.88"/><circle cx="390.0" cy="218.2" r="9.6" fill="rgb(205,250,20)" fill-opacity="0.88"/><circle cx="417.8" cy="143.6" r="9.6" fill="rgb(252,252,0)" fill-opacity="0.88"/><circle cx="407.9" cy="123.5" r="9.6" fill="rgb(252,252,0)" fill-opacity="0.88"/><circle cx="422.6" cy="118.7" r="9.6" fill="rgb(252,252,0)" fill-opacity="0.88"/><circle cx="390.0" cy="101.5" r="9.6" fill="rgb(255,45,45)" fill-opacity="0.88"/><text x="15.1" y="180.0" class="ml">N/A</text><text x="27.2" y="189.9" class="ml">59</text><text x="56.2" y="185.7" class="ml">N/A</text><text x="46.1" y="200.0" class="ml">N/A</text><text x="41.0" y="231.8" class="ml">36</text><text x="220.6" y="116.2" class="ml">142</text><text x="227.2" y="119.9" class="ml">53</text><text x="192.4" y="134.3" class="ml">63</text><text x="160.7" y="190.6" class="ml">72</text><text x="171.2" y="183.6" class="ml">152</text><text x="187.2" y="198.5" class="ml">72</text><text x="178.7" y="199.5" class="ml">N/A</text><text x="215.8" y="185.1" class="ml">N/A</text><text x="255.1" y="144.3" class="ml">N/A</text><text x="271.6" y="141.1" class="ml">117</text><text x="277.4" y="150.2" class="ml">116</text><text x="292.2" y="159.8" class="ml">92</text><text x="274.9" y="160.2" class="ml">N/A</text><text x="283.8" y="157.6" class="ml">151</text><text x="261.6" y="167.2" class="ml">82</text><text x="248.4" y="179.3" class="ml">54</text><text x="248.8" y="208.0" class="ml">N/A</text><text x="260.4" y="192.1" class="ml">152</text><text x="298.6" y="131.1" class="ml">N/A</text><text x="317.4" y="122.2" class="ml">113</text><text x="317.8" y="129.3" class="ml">180</text><text x="314.4" y="140.2" class="ml">113</text><text x="328.1" y="118.5" class="ml">279</text><text x="333.6" y="118.5" class="ml">162</text><text x="325.8" y="139.8" class="ml">185</text><text x="329.2" y="145.4" class="ml">156</text><text x="333.9" y="152.2" class="ml">174</text><text x="314.4" y="160.0" class="ml">130</text><text x="349.1" y="153.8" class="ml">74</text><text x="352.8" y="165.0" class="ml">151</text><text x="358.4" y="161.9" class="ml">210</text><text x="325.6" y="172.3" class="ml">160</text><text x="338.6" y="174.8" class="ml">134</text><text x="339.9" y="183.4" class="ml">120</text><text x="338.6" y="195.8" class="ml">72</text><text x="368.9" y="176.6" class="ml">93</text><text x="388.1" y="168.6" class="ml">74</text><text x="382.6" y="174.1" class="ml">121</text><text x="402.6" y="163.5" class="ml">68</text><text x="389.4" y="188.4" class="ml">96</text><text x="389.8" y="221.0" class="ml">52</text><text x="417.6" y="146.4" class="ml">66</text><text x="407.6" y="126.3" class="ml">86</text><text x="422.4" y="121.5" class="ml">56</text><text x="389.8" y="104.3" class="ml">183</text><!--MAPEND--></svg></div>

<div id="pop" class="abs" style="left:309.8px;top:51.7px;width:107px;height:89px;background:#fff;border-radius:4px;box-shadow:0 2px 9px rgba(0,0,0,0.4);font-size:9.2px;color:#222;text-align:center;line-height:9.8px">
  <div style="padding-top:11px">Bishkek<br>2020-12-15 7:00 PM<br>(LT)</div>
  <div class="abs" style="left:10px;top:40px;width:87px;height:38.5px;border:1px solid #034a82;background:#fff">
    <div class="abs" style="left:0;top:0;width:85px;height:18px;background:#034a82"></div>
    <div class="abs" style="left:54.5px;top:18px;width:30.5px;height:18.5px;background:#98004a"></div>
    <div class="abs" style="left:0;top:4px;width:55px;color:#fff;font-weight:bold">Pollutant</div>
    <div class="abs" style="left:55px;top:4px;width:30px;color:#fff;font-weight:bold">AQI</div>
    <div class="abs" style="left:0;top:23px;width:55px;color:#333">PM2.5</div>
    <div class="abs" style="left:55px;top:23px;width:30px;color:#fff;font-weight:bold">279</div>
  </div>
</div>
<svg class="abs" style="left:323px;top:140px" width="36" height="10" viewBox="0 0 36 10"><path d="M10.7 0 L17.7 7.8 L24.7 0Z" fill="#fff"/></svg>
<div class="abs ph" style="top:1.6px">Select a City</div>
<div class="abs dd" style="top:26.5px">Bishkek<span class="x">×</span><span class="ar"></span></div>
<div class="abs ph" style="top:65px">Select a Parameter</div>
<div class="abs dd" style="top:89.5px">PM2.5<span class="x">×</span><span class="ar"></span></div>
<div id="rss" class="abs">
  <div class="abs" style="left:6.5px;top:6px;font-weight:bold;font-size:9.1px;color:#333">Bishkek</div>
  <svg class="abs" style="left:192px;top:17px" width="23" height="23" viewBox="0 0 23 23">
    <rect width="23" height="23" fill="#f1b440"/>
    <circle cx="4.9" cy="17.9" r="2.1" fill="#fff"/>
    <path d="M3.1 10.9 A9 9 0 0 1 12.1 19.9" stroke="#fff" stroke-width="2.8" fill="none"/>
    <path d="M3.1 4.9 A15 15 0 0 1 18.1 19.9" stroke="#fff" stroke-width="2.8" fill="none"/>
  </svg>
</div>
<div id="note" class="abs">Note: Values above 500 are considered Beyond the AQI. Follow<br>recommendations for the Hazardous category. Additional information<br>on reducing exposure to extremely high levels of particle pollution is<br>available <b>here</b>.</div>

<div class="abs tab" style="left:14px;width:72px;background:#fff;border:1px solid #999;border-top:2px solid #034a82;border-bottom:none;color:#333;line-height:20.5px">AQI</div>
<div class="abs tab" style="left:88px;width:111px">Concentration</div>
<div class="abs tab" style="left:201px;width:92px">Historical</div>
<div id="tabline" class="abs"></div>
<div id="learn" class="abs">Learn more about how the Air Quality Index [AQI] is calculated from the EPA <b>here</b>.</div>

<div id="chart" class="abs"></div><!--CHARTSTART--><svg class="abs" style="left:14px;top:368px" width="534" height="197" viewBox="14 368 534 197"><text x="281.2" y="383.5" class="ct">Bishkek – PM2.5</text><rect x="64.4" y="408.40" width="477" height="1" fill="#e6e6e6"/><rect x="64.4" y="432.66" width="477" height="1" fill="#e6e6e6"/><rect x="64.4" y="456.92" width="477" height="1" fill="#e6e6e6"/><rect x="64.4" y="481.18" width="477" height="1" fill="#e6e6e6"/><rect x="64.4" y="505.44" width="477" height="1" fill="#e6e6e6"/><text x="54.2" y="410.70" class="yl">500</text><text x="54.2" y="434.96" class="yl">400</text><text x="54.2" y="459.22" class="yl">300</text><text x="54.2" y="483.48" class="yl">200</text><text x="54.2" y="507.74" class="yl">100</text><text x="54.2" y="532.00" class="yl">0</text><text transform="translate(34.4 466.5) rotate(-90)" class="yt">AQI</text><rect x="69.13" y="467.50" width="10.4" height="62.70" fill="#98004a" stroke="#333" stroke-width="0.8"/><rect x="88.99" y="472.40" width="10.4" height="57.80" fill="#98004a" stroke="#333" stroke-width="0.8"/><rect x="108.86" y="472.40" width="10.4" height="57.80" fill="#98004a" stroke="#333" stroke-width="0.8"/><rect x="128.72" y="470.80" width="10.4" height="59.40" fill="#98004a" stroke="#333" stroke-width="0.8"/><rect x="148.58" y="468.20" width="10.4" height="62.00" fill="#98004a" stroke="#333" stroke-width="0.8"/><rect x="168.44" y="465.20" width="10.4" height="65.00" fill="#98004a" stroke="#333" stroke-width="0.8"/><rect x="188.30" y="466.20" width="10.4" height="64.00" fill="#98004a" stroke="#333" stroke-width="0.8"/><rect x="208.16" y="467.50" width="10.4" height="62.70" fill="#98004a" stroke="#333" stroke-width="0.8"/><rect x="228.03" y="468.80" width="10.4" height="61.40" fill="#98004a" stroke="#333" stroke-width="0.8"/><rect x="247.89" y="468.20" width="10.4" height="62.00" fill="#98004a" stroke="#333" stroke-width="0.8"/><rect x="267.75" y="469.40" width="10.4" height="60.80" fill="#98004a" stroke="#333" stroke-width="0.8"/><rect x="287.61" y="470.80" width="10.4" height="59.40" fill="#98004a" stroke="#333" stroke-width="0.8"/><rect x="307.47" y="472.70" width="10.4" height="57.50" fill="#98004a" stroke="#333" stroke-width="0.8"/><rect x="327.34" y="473.40" width="10.4" height="56.80" fill="#98004a" stroke="#333" stroke-width="0.8"/><rect x="347.20" y="473.40" width="10.4" height="56.80" fill="#98004a" stroke="#333" stroke-width="0.8"/><rect x="367.06" y="472.40" width="10.4" height="57.80" fill="#98004a" stroke="#333" stroke-width="0.8"/><rect x="386.92" y="467.50" width="10.4" height="62.70" fill="#98004a" stroke="#333" stroke-width="0.8"/><rect x="406.79" y="462.30" width="10.4" height="67.90" fill="#98004a" stroke="#333" stroke-width="0.8"/><rect x="426.65" y="454.80" width="10.4" height="75.40" fill="#4a0024" stroke="#333" stroke-width="0.8"/><rect x="446.51" y="453.50" width="10.4" height="76.70" fill="#4a0024" stroke="#333" stroke-width="0.8"/><rect x="466.37" y="456.10" width="10.4" height="74.10" fill="#4a0024" stroke="#333" stroke-width="0.8"/><rect x="486.23" y="460.30" width="10.4" height="69.90" fill="#98004a" stroke="#333" stroke-width="0.8"/><rect x="506.09" y="462.30" width="10.4" height="67.90" fill="#98004a" stroke="#333" stroke-width="0.8"/><rect x="525.96" y="462.30" width="10.4" height="67.90" fill="#98004a" stroke="#333" stroke-width="0.8"/><rect x="64.4" y="529.70" width="477.4" height="1" fill="#ccd6eb"/><rect x="63.90" y="530.20" width="1" height="6.4" fill="#ccd6eb"/><rect x="83.76" y="530.20" width="1" height="6.4" fill="#ccd6eb"/><rect x="103.62" y="530.20" width="1" height="6.4" fill="#ccd6eb"/><rect x="123.49" y="530.20" width="1" height="6.4" fill="#ccd6eb"/><rect x="143.35" y="530.20" width="1" height="6.4" fill="#ccd6eb"/><rect x="163.21" y="530.20" width="1" height="6.4" fill="#ccd6eb"/><rect x="183.07" y="530.20" width="1" height="6.4" fill="#ccd6eb"/><rect x="202.93" y="530.20" width="1" height="6.4" fill="#ccd6eb"/><rect x="222.80" y="530.20" width="1" height="6.4" fill="#ccd6eb"/><rect x="242.66" y="530.20" width="1" height="6.4" fill="#ccd6eb"/><rect x="262.52" y="530.20" width="1" height="6.4" fill="#ccd6eb"/><rect x="282.38" y="530.20" width="1" height="6.4" fill="#ccd6eb"/><rect x="302.24" y="530.20" width="1" height="6.4" fill="#ccd6eb"/><rect x="322.11" y="530.20" width="1" height="6.4" fill="#ccd6eb"/><rect x="341.97" y="530.20" width="1" height="6.4" fill="#ccd6eb"/><rect x="361.83" y="530.20" width="1" height="6.4" fill="#ccd6eb"/><rect x="381.69" y="530.20" width="1" height="6.4" fill="#ccd6eb"/><rect x="401.55" y="530.20" width="1" height="6.4" fill="#ccd6eb"/><rect x="421.42" y="530.20" width="1" height="6.4" fill="#ccd6eb"/><rect x="441.28" y="530.20" width="1" height="6.4" fill="#ccd6eb"/><rect x="461.14" y="530.20" width="1" height="6.4" fill="#ccd6eb"/><rect x="481.00" y="530.20" width="1" height="6.4" fill="#ccd6eb"/><rect x="500.86" y="530.20" width="1" height="6.4" fill="#ccd6eb"/><rect x="520.73" y="530.20" width="1" height="6.4" fill="#ccd6eb"/><rect x="540.59" y="530.20" width="1" height="6.4" fill="#ccd6eb"/><text transform="translate(75.83 540.8) rotate(-45)" class="xl">8 PM</text><text transform="translate(95.69 540.8) rotate(-45)" class="xl">9 PM</text><text transform="translate(115.56 540.8) rotate(-45)" class="xl">10 PM</text><text transform="translate(135.42 540.8) rotate(-45)" class="xl">11 PM</text><text transform="translate(155.28 540.8) rotate(-45)" class="xl">12/15/2020 12 AM</text><text transform="translate(175.14 540.8) rotate(-45)" class="xl">1 AM</text><text transform="translate(195.00 540.8) rotate(-45)" class="xl">2 AM</text><text transform="translate(214.86 540.8) rotate(-45)" class="xl">3 AM</text><text transform="translate(234.73 540.8) rotate(-45)" class="xl">4 AM</text><text transform="translate(254.59 540.8) rotate(-45)" class="xl">5 AM</text><text transform="translate(274.45 540.8) rotate(-45)" class="xl">6 AM</text><text transform="translate(294.31 540.8) rotate(-45)" class="xl">7 AM</text><text transform="translate(314.17 540.8) rotate(-45)" class="xl">8 AM</text><text transform="translate(334.04 540.8) rotate(-45)" class="xl">9 AM</text><text transform="translate(353.90 540.8) rotate(-45)" class="xl">10 AM</text><text transform="translate(373.76 540.8) rotate(-45)" class="xl">11 AM</text><text transform="translate(393.62 540.8) rotate(-45)" class="xl">12 PM</text><text transform="translate(413.49 540.8) rotate(-45)" class="xl">1 PM</text><text transform="translate(433.35 540.8) rotate(-45)" class="xl">2 PM</text><text transform="translate(453.21 540.8) rotate(-45)" class="xl">3 PM</text><text transform="translate(473.07 540.8) rotate(-45)" class="xl">4 PM</text><text transform="translate(492.93 540.8) rotate(-45)" class="xl">5 PM</text><text transform="translate(512.79 540.8) rotate(-45)" class="xl">6 PM</text><text transform="translate(532.66 540.8) rotate(-45)" class="xl">7 PM</text></svg><!--CHARTEND-->

<div id="cc" class="abs">
  <div class="top">
    <div style="font-size:10px;padding-top:5px;line-height:12px">Current Conditions</div>
    <div style="font-size:8px;line-height:12px;padding-top:2.7px">observed at</div>
    <div style="font-size:10px;line-height:14px;margin-top:-0.2px">Dec 15, 2020 7:00 PM (LT)</div>
  </div>
  <div class="mid">279 AQI<br>Very Unhealthy<br>PM2.5</div>
  <div class="hm">Health Message</div>
  <div class="body">AQI values between 201 and 300 trigger a<br>health alert, meaning everyone may<br>experience more serious health effects.</div>
</div>
</body></html>
